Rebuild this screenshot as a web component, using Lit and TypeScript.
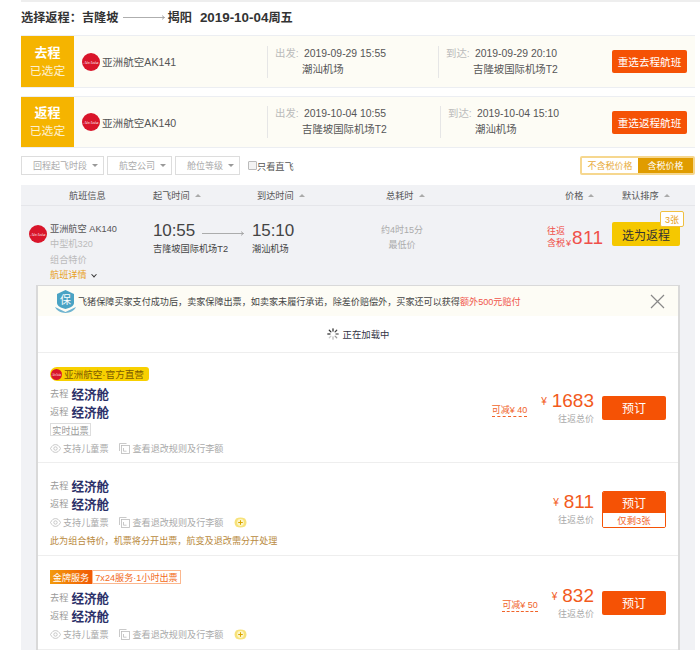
import { LitElement, html, css, svg } from "lit";
import { customElement } from "lit/decorators.js";

const logo = (size: number) => html`<svg class="logo" width=${size} height=${size} viewBox="0 0 18 18">
  <circle cx="9" cy="9" r="9" fill="#d9152a"></circle>
  <text x="9" y="10.800" text-anchor="middle" font-size="4.800" font-style="italic" font-family="Liberation Serif, serif" fill="#fff">AirAsia</text>
</svg>`;

const eye = html`<svg class="ico" width="11" height="9" viewBox="0 0 11 9" fill="none" stroke="#bbb" stroke-width=".8">
  <path d="M.5 4.5C2 1.6 3.6.6 5.5.6S9 1.6 10.5 4.5C9 7.4 7.4 8.4 5.5 8.4S2 7.4.5 4.5Z"></path>
  <circle cx="5.5" cy="4.5" r="1.7"></circle>
</svg>`;

const doc = html`<svg class="ico" width="11" height="11" viewBox="0 0 11 11" fill="none" stroke="#bbb" stroke-width=".8">
  <path d="M.5 8V.5h7"></path>
  <rect x="2.5" y="2.5" width="8" height="8"></rect>
  <path d="M4.5 5v3.2h3"></path>
</svg>`;

const plus = html`<svg class="plus" width="13" height="11" viewBox="0 0 13 11">
  <path d="M2 1.5C5 .2 8 .2 11 1.5 13 4 13 7 11 9.5 8 10.8 5 10.8 2 9.5 0 7 0 4 2 1.5Z" fill="#f7e27a"></path>
  <circle cx="6.5" cy="5.5" r="3.4" fill="#fdf6c8"></circle>
  <path d="M6.5 3.2v4.6M4.2 5.5h4.6" stroke="#d9a400" stroke-width="1"></path>
</svg>`;

const caret = html`<span class="caret"></span>`;
const up = html`<span class="up"></span>`;

const arrow = (w: number) => html`<svg class="arrow" width=${w} height="5" viewBox="0 0 ${w} 5" fill="none" stroke="#999" stroke-width=".8">
  ${svg`<path d="M0 2.5H${w - 0.5}M${w - 3} .6L${w - 0.5} 2.5L${w - 3} 4.4"></path>`}
</svg>`;

@customElement("app-root")
export class AppRoot extends LitElement {
  static styles = css`
    :host {
      display: block;
      width: 700px;
      height: 650px;
      overflow: hidden;
      background: #fff;
      font-family: "Liberation Sans", "Noto Sans CJK SC", sans-serif;
      color: #333;
      font-size: 10.5px;
    }
    * { box-sizing: border-box; }
    .page { padding: 0 5px 0 21px; }
    .topbar { height: 2px; background: #eee; margin-left: 21px; }
    .title {
      display: flex; align-items: center; height: 33px; padding-bottom: 3px;
      font-size: 12.2px; font-weight: 700; color: #333; white-space: nowrap;
    }
    .title .way { display: block; margin: 0 3px 0 4px; }
    .title .way svg { display: block; }
    .title .date { margin-left: 8px; font-size: 13.4px; }
    .title .date small { font-size: 12.2px; }
    .card {
      display: grid;
      height: 53px;
      margin-bottom: 8px;
      background: #fdfcf5;
      border-top: 1px solid #eceef2;
      border-bottom: 1px solid #eceef2;
      align-items: center;
    }
    .card.c1 { grid-template-columns: 53px 193px 171px 1fr auto; }
    .card.c2 { height: 52px; grid-template-columns: 53px 193px 173px 1fr auto; }
    .tag {
      background: #f5b400; color: #fff; height: 100%;
      display: flex; flex-direction: column; justify-content: center; align-items: center;
      font-size: 11.8px; line-height: 18px;
    }
    .tag b { font-weight: 700; font-size: 13px; }
    .tag span { opacity: .8; }
    .air { display: flex; align-items: center; gap: 2px; padding-left: 8px; font-size: 10.6px; color: #555; }
    .leg {
      display: grid; grid-template-columns: 29px auto; height: 32px; align-items: center;
      border-left: 1px solid #e6e6e6; padding-left: 7px; font-size: 10.4px; color: #555; line-height: 16px;
    }
    .leg i { font-style: normal; color: #bbb; }
    .leg span { white-space: nowrap; }
    .leg .place { grid-column: 2; margin-left: -2px; }
    .rebtn {
      width: 75px; height: 23px; margin-right: 8px;
      background: #f55205; color: #fff; border-radius: 2px;
      display: flex; align-items: center; justify-content: center; font-size: 10.6px;
    }
    .filters { display: flex; align-items: center; height: 19px; gap: 3px; }
    .sel {
      height: 19px; border: 1px solid #ddd; color: #aaa; font-size: 9px;
      display: flex; align-items: center; justify-content: flex-end; gap: 5px; padding-right: 5px;
    }
    .sel.a { width: 83px; }
    .sel.b { width: 65px; }
    .sel.c { width: 65px; }
    .caret { width: 0; height: 0; border: 3px solid transparent; border-top: 3px solid #999; border-bottom: 0; }
    .up { display: inline-block; width: 0; height: 0; border: 3px solid transparent; border-bottom: 3px solid #aaa; border-top: 0; margin-left: 5px; vertical-align: 2px; }
    .direct { display: flex; align-items: center; margin-left: 5px; font-size: 9.2px; color: #555; }
    .box { width: 9px; height: 9px; border: 1px solid #bbb; background: #f3f3f3; border-radius: 1px; }
    .toggle {
      margin-left: auto; width: 115px; height: 19px; display: flex;
      border: 2px solid #f6d78f; border-radius: 2px; font-size: 9px;
    }
    .toggle span { display: flex; align-items: center; justify-content: center; }
    .toggle .off { width: 56px; color: #e8ac3c; background: #fff; }
    .toggle .on { flex: 1; color: #fff; background: #e09c00; }
    .list { margin-top: 10px; background: #f1f2f5; height: 470px; }
    .head {
      display: grid; grid-template-columns: 132px 104px 129px 179px 57px 1fr;
      height: 21px; align-items: center; font-size: 9.2px; color: #555; border-bottom: 1px solid #e5e6ea;
    }
    .head .first { padding-left: 48px; }
    .flight { position: relative; height: 79px; display: grid; grid-template-columns: 132px 232px 100px 1fr; }
    .finfo { display: flex; padding: 16px 0 0 8px; gap: 3px; }
    .finfo .logo { margin-top: 3px; }
    .finfo .lines { font-size: 9.2px; line-height: 15.4px; color: #555; white-space: nowrap; }
    .finfo .gray { color: #bbb; }
    .finfo .link { color: #e8a020; display: flex; align-items: center; gap: 5px; }
    .chev { width: 4px; height: 4px; border-right: 1px solid #333; border-bottom: 1px solid #333; transform: rotate(45deg) translate(-1px, -1px); }
    .times { display: grid; grid-template-columns: 49px 50px auto; padding-top: 15px; align-content: start; }
    .times .t { font-size: 17px; line-height: 20px; color: #444; letter-spacing: -.1px; }
    .times .arrow { margin-top: 10px; }
    .times .p { font-size: 9.2px; color: #444; line-height: 14px; margin-top: 1px; white-space: nowrap; }
    .dur { padding-top: 17px; color: #aaa; font-size: 9px; line-height: 15.4px; text-align: center; margin-left: -33px; width: 100px; }
    .buy { position: relative; }
    .buy .pr { position: absolute; left: 62px; top: 19px; display: flex; align-items: flex-end; color: #f0504a; white-space: nowrap; }
    .pr .small { font-size: 9px; line-height: 12px; width: 19px; }
    .pr .y { font-size: 9px; margin: 0 1px 0 0; line-height: 12px; }
    .pr .n { font-size: 19px; line-height: 24px; letter-spacing: .4px; margin-bottom: -1px; }
    .choose {
      position: absolute; left: 127px; top: 16px; width: 68px; height: 24px;
      background: #f5c800; border-radius: 2px; color: #333; font-size: 12px;
      display: flex; align-items: center; justify-content: center;
    }
    .left3 {
      position: absolute; left: 175px; top: 5px; width: 24px; height: 16px;
      background: #fff; border: 1px solid #f0c040; border-radius: 2px; color: #e8a020; font-size: 9px;
      display: flex; align-items: center; justify-content: center;
    }
    .panel {
      margin: 0 15px; background: #fff; width: 644px;
      border: 1px solid #d9d9d9; border-left-width: 2px; border-right-width: 2px; height: 380px;
    }
    .notice {
      height: 30px; background: #fdfcf5; display: flex; align-items: center;
      padding-left: 17px; font-size: 9.1px; color: #444; gap: 2px; white-space: nowrap;
    }
    .notice em { font-style: normal; color: #f0544a; }
    .notice .x { margin-left: auto; margin-right: 13px; }
    .loading {
      height: 37px; display: flex; align-items: center; justify-content: center; gap: 4px;
      font-size: 9.4px; color: #334; border-bottom: 1px solid #eee;
    }
    .item { display: flex; border-bottom: 1px solid #eee; padding: 0 12px; }
    .item.i1 { height: 110px; }
    .item.i2 { height: 93px; }
    .item.i3 { height: 94px; }
    .main { flex: 1; padding-top: 14px; }
    .i2 .main { padding-top: 13px; }
    .yel {
      display: flex; align-items: center; gap: 2px; height: 14px; width: 99px; padding-left: 1px; margin-bottom: 3px;
      background: #f8d000; border-radius: 7px 3px 3px 7px; font-size: 9.6px; color: #7a5a00; white-space: nowrap;
    }
    .gold { display: flex; height: 14px; margin-bottom: 4px; font-size: 9.1px; white-space: nowrap; }
    .gold span:first-child {
      width: 42px; background: linear-gradient(90deg, #f29a0c, #f25a05); color: #fff;
      display: flex; align-items: center; justify-content: center;
    }
    .gold span:last-child {
      width: 89px; border: 1px solid #fbb78e; color: #f26a20;
      display: flex; align-items: center; justify-content: center;
    }
    .cabin { display: flex; align-items: center; height: 18px; font-size: 9.2px; color: #999; gap: 3px; }
    .cabin b { font-size: 12.6px; color: #2b3068; font-weight: 700; }
    .tick {
      display: flex; align-items: center; justify-content: center; margin-top: 3px; width: 41px; height: 13px;
      border: 1px solid #ddd; color: #999; font-size: 9.1px;
    }
    .extras { display: flex; align-items: center; height: 18px; margin-top: 1px; font-size: 9.1px; color: #aaa; white-space: nowrap; }
    .tick + .extras { margin-top: 3px; }
    .extras .ico { margin-right: 2px; }
    .extras .gap { margin-left: 11px; }
    .plus { margin-left: 11px; }
    .warn { font-size: 9.1px; color: #b98a3e; height: 18px; display: flex; align-items: center; white-space: nowrap; }
    .side { display: flex; align-items: center; gap: 8px; }
    .cut {
      font-size: 9px; color: #f0642a; border-bottom: 1px dashed #f0642a; line-height: 12px; margin-right: 6px; margin-top: 5px; white-space: nowrap;
    }
    .total { text-align: right; }
    .total .amt { color: #f25a1c; font-size: 19px; line-height: 22px; white-space: nowrap; }
    .total .amt small { font-size: 10px; margin-right: 5px; vertical-align: 2px; }
    .total .lbl { color: #aaa; font-size: 9px; line-height: 13px; }
    .book {
      width: 64px; height: 24px; background: #f55205; color: #fff; border-radius: 2px; font-size: 12px;
      display: flex; align-items: center; justify-content: center;
    }
    .stack { width: 64px; height: 37px; display: flex; flex-direction: column; border: 1px solid #f55205; border-radius: 2px; overflow: hidden; }
    .stack .book { width: auto; height: 23px; border-radius: 0; }
    .stack .rem { flex: 1; background: #fff; color: #f0642a; font-size: 9.4px; display: flex; align-items: center; justify-content: center; }
  `;

  private cabins() {
    return html`<div class="cabin"><span>去程</span><b>经济舱</b></div>
      <div class="cabin"><span>返程</span><b>经济舱</b></div>`;
  }

  private extras(withPlus: boolean) {
    return html`<div class="extras">${eye}<span>支持儿童票</span><span class="gap"></span>${doc}<span>查看退改规则及行李额</span>${withPlus ? plus : ""}</div>`;
  }

  private card(cls: string, a: string, air: string, d1: string, p1: string, d2: string, p2: string, btn: string) {
    return html`<div class="card ${cls}">
      <div class="tag"><b>${a}</b><span>已选定</span></div>
      <div class="air">${logo(18)}<span>${air}</span></div>
      <div class="leg"><i>出发:</i><span>${d1}</span><span class="place">${p1}</span></div>
      <div class="leg"><i>到达:</i><span>${d2}</span><span class="place">${p2}</span></div>
      <div class="rebtn">${btn}</div>
    </div>`;
  }

  render() {
    return html`
      <div class="topbar"></div>
      <div class="page">
        <div class="title"><span>选择返程：吉隆坡</span><span class="way">${arrow(42)}</span><span>揭阳</span><span class="date">2019-10-04<small>周五</small></span></div>
        ${this.card("c1", "去程", "亚洲航空AK141", "2019-09-29 15:55", "潮汕机场", "2019-09-29 20:10", "吉隆坡国际机场T2", "重选去程航班")}
        ${this.card("c2", "返程", "亚洲航空AK140", "2019-10-04 10:55", "吉隆坡国际机场T2", "2019-10-04 15:10", "潮汕机场", "重选返程航班")}
        <div class="filters">
          <div class="sel a"><span>回程起飞时段</span>${caret}</div>
          <div class="sel b"><span>航空公司</span>${caret}</div>
          <div class="sel c"><span>舱位等级</span>${caret}</div>
          <div class="direct"><span class="box"></span><span>只看直飞</span></div>
          <div class="toggle"><span class="off">不含税价格</span><span class="on">含税价格</span></div>
        </div>
        <div class="list">
          <div class="head">
            <span class="first">航班信息</span>
            <span>起飞时间${up}</span>
            <span>到达时间${up}</span>
            <span>总耗时${up}</span>
            <span>价格${up}</span>
            <span>默认排序${up}</span>
          </div>
          <div class="flight">
            <div class="finfo">
              ${logo(18)}
              <div class="lines">
                <div>亚洲航空 AK140</div>
                <div class="gray">中型机320</div>
                <div class="gray">组合特价</div>
                <div class="link">航班详情<span class="chev"></span></div>
              </div>
            </div>
            <div class="times">
              <span class="t">10:55</span>${arrow(42)}<span class="t">15:10</span>
              <span class="p">吉隆坡国际机场T2</span><span></span><span class="p">潮汕机场</span>
            </div>
            <div class="dur"><div>约4时15分</div><div>最低价</div></div>
            <div class="buy">
              <div class="pr"><span class="small">往返<br />含税</span><span class="y">¥</span><span class="n">811</span></div>
              <div class="choose">选为返程</div>
              <div class="left3">3张</div>
            </div>
          </div>
          <div class="panel">
            <div class="notice">
              <svg width="21" height="23" viewBox="0 0 21 23">
                <path d="M10.5 0L19 4v9c0 3-4 5-8.500 6C6 18 2 16 2 13V4Z" fill="#4aa3c4"></path>
                <path d="M0 17c3 1 6 3 10.500 5 4.500-2 7.500-4 10.500-5-1 3-6 6-10.500 6S1 20 0 17Z" fill="#6fb4d0"></path>
                <text x="10.500" y="14" text-anchor="middle" font-size="11" fill="#fff" font-family="Noto Sans CJK SC, sans-serif">保</text>
              </svg>
              <span>飞猪保障买家支付成功后，卖家保障出票，如卖家未履行承诺，除差价赔偿外，买家还可以获得<em>额外500元赔付</em></span>
              <svg class="x" width="15" height="15" viewBox="0 0 15 15" stroke="#888" stroke-width="1.200"><path d="M1 1l13 13M14 1L1 14"></path></svg>
            </div>
            <div class="loading">
              <svg width="12" height="12" viewBox="0 0 12 12" stroke-width="1.300" stroke-linecap="round">
                <path d="M6 .8v2.200" stroke="#333"></path><path d="M9.700 2.300L8.100 3.900" stroke="#444"></path>
                <path d="M11.200 6H9" stroke="#777"></path><path d="M9.700 9.700L8.100 8.100" stroke="#999"></path>
                <path d="M6 11.200V9" stroke="#bbb"></path><path d="M2.300 9.700l1.600-1.600" stroke="#ccc"></path>
                <path d="M.8 6H3" stroke="#555"></path><path d="M2.300 2.300l1.600 1.600" stroke="#333"></path>
              </svg>
              <span>正在加载中</span>
            </div>
            <div class="item i1">
              <div class="main">
                <div class="yel">${logo(11)}<span>亚洲航空·官方直营</span></div>
                ${this.cabins()}
                <div class="tick">实时出票</div>
                ${this.extras(false)}
              </div>
              <div class="side">
                <span class="cut">可减¥ 40</span>
                <div class="total"><div class="amt"><small>¥</small>1683</div><div class="lbl">往返总价</div></div>
                <div class="book">预订</div>
              </div>
            </div>
            <div class="item i2">
              <div class="main">
                ${this.cabins()}
                ${this.extras(true)}
                <div class="warn">此为组合特价，机票将分开出票，航变及退改需分开处理</div>
              </div>
              <div class="side">
                <div class="total"><div class="amt"><small>¥</small>811</div><div class="lbl">往返总价</div></div>
                <div class="stack"><div class="book">预订</div><div class="rem">仅剩3张</div></div>
              </div>
            </div>
            <div class="item i3">
              <div class="main">
                <div class="gold"><span>金牌服务</span><span>7x24服务·1小时出票</span></div>
                ${this.cabins()}
                ${this.extras(true)}
              </div>
              <div class="side">
                <span class="cut">可减¥ 50</span>
                <div class="total"><div class="amt"><small>¥</small>832</div><div class="lbl">往返总价</div></div>
                <div class="book">预订</div>
              </div>
            </div>
          </div>
        </div>
      </div>
    `;
  }
}
